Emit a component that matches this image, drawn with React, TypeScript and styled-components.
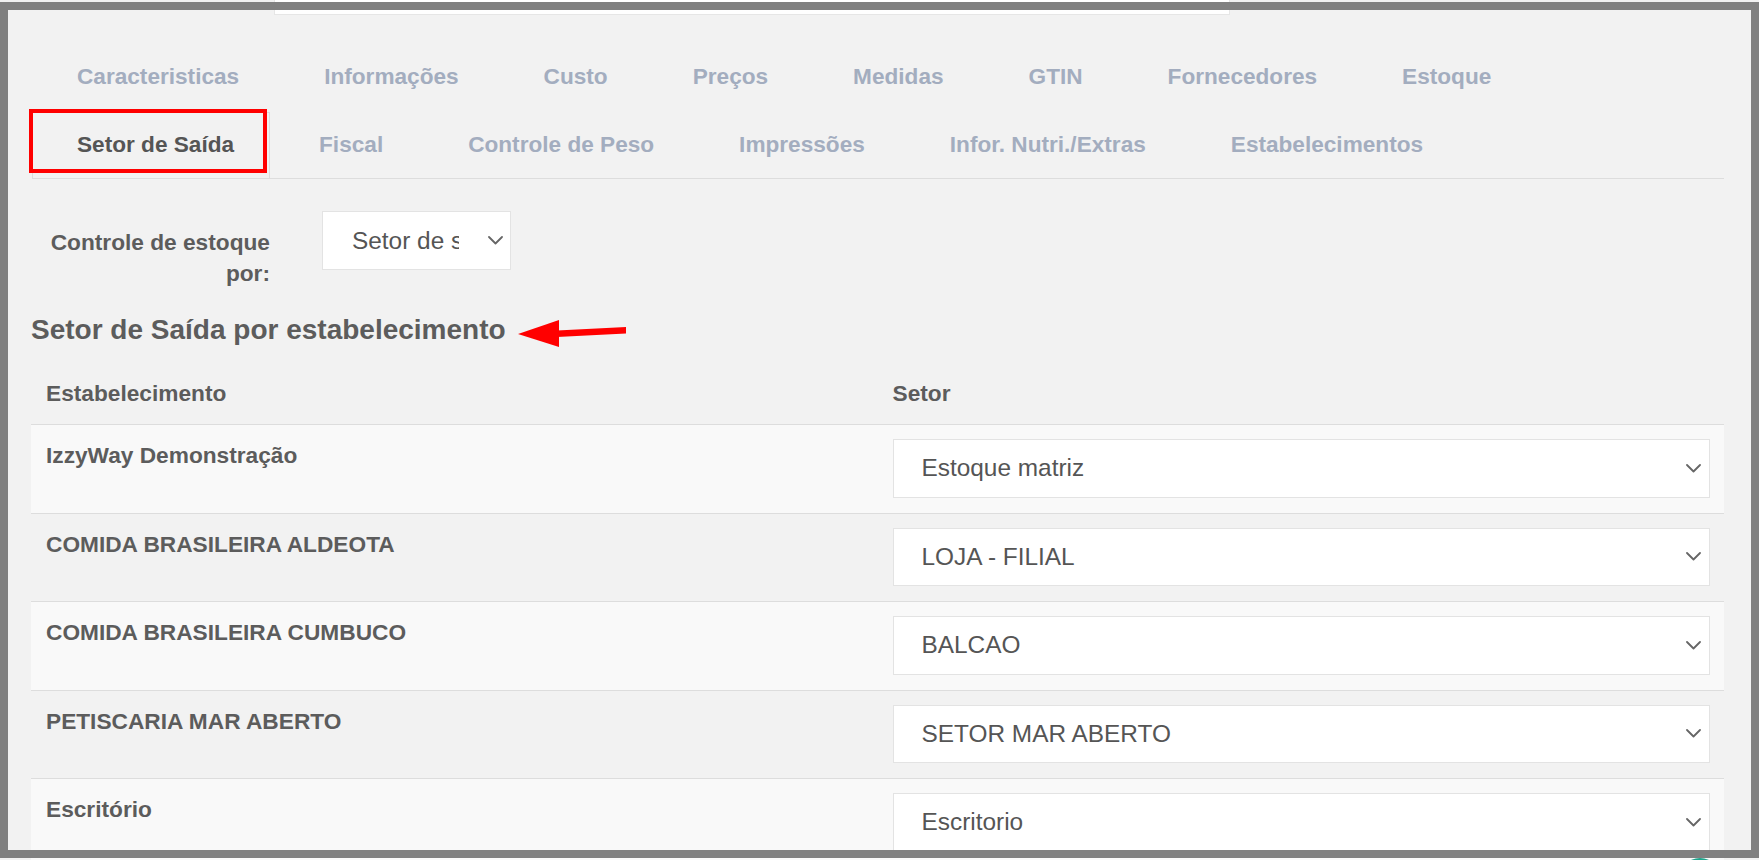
import React from "react";
import styled, { createGlobalStyle } from "styled-components";

const GlobalStyle = createGlobalStyle`
  html, body {
    margin: 0;
    padding: 0;
    background: #f2f2f2;
    overflow: hidden;
  }
  body {
    font-family: "Liberation Sans", Arial, Helvetica, sans-serif;
  }
  *, *::before, *::after {
    box-sizing: border-box;
  }
`;

const Page = styled.div`
  position: relative;
  width: 1759px;
  height: 860px;
  overflow: hidden;
  background: #f2f2f2;
`;

const Content = styled.div`
  display: flex;
  flex-direction: column;
  padding: 0 35px 0 31px;
`;

const TopCard = styled.div`
  margin-left: 243px;
  width: 956px;
  height: 15px;
  background: #ffffff;
  border: 1px solid #e6e6e6;
  border-top: none;
`;

const TabList = styled.ul`
  list-style: none;
  margin: 29px 0 0 1px;
  padding: 0;
  display: flex;
  flex-wrap: wrap;
  row-gap: 2px;
  border-bottom: 1px solid #dddddd;
`;

const TabItem = styled.li<{ $active?: boolean }>`
  position: relative;
  margin-right: 4px;
  padding: 14px 35px 16px 44px;
  border: 1px solid ${(p) => (p.$active ? "#dddddd" : "transparent")};
  border-bottom: none;
  font-size: 22.62px;
  font-weight: 700;
  line-height: 35px;
  white-space: nowrap;
  color: ${(p) => (p.$active ? "#555555" : "#a3adbf")};
  cursor: pointer;
`;

const Highlight = styled.span`
  position: absolute;
  left: -4px;
  top: -4px;
  width: 238px;
  height: 64px;
  border: 4px solid #ff0000;
  pointer-events: none;
`;

const FormRow = styled.div`
  display: grid;
  grid-template-columns: 239px 189px;
  column-gap: 52px;
  align-items: start;
  margin-top: 32px;
`;

const FieldLabel = styled.label`
  padding-top: 15.5px;
  text-align: right;
  font-size: 22.7px;
  font-weight: 700;
  line-height: 31px;
  color: #5c5c5c;
`;

const SelectBox = styled.div<{ $compact?: boolean }>`
  display: flex;
  align-items: center;
  height: ${(p) => (p.$compact ? "59px" : "58.5px")};
  padding: ${(p) => (p.$compact ? "0 7px 0 29px" : "0 8px 0 28px")};
  background: #ffffff;
  border: 1px solid #e3e3e3;
  font-size: 24.4px;
  line-height: 30px;
  color: #555555;
`;

const SelectValue = styled.span<{ $compact?: boolean }>`
  flex: 1;
  min-width: 0;
  overflow: hidden;
  white-space: nowrap;
  margin-right: ${(p) => (p.$compact ? "29px" : "12px")};
`;

const Chevron = styled.svg`
  flex: none;
  display: block;
`;

const SectionTitle = styled.div`
  display: flex;
  height: 36px;
  margin-top: 23.5px;
`;

const TitleText = styled.h3`
  margin: 0;
  font-size: 28px;
  font-weight: 700;
  line-height: 36px;
  color: #5c5c5c;
  white-space: nowrap;
`;

const Arrow = styled.svg`
  flex: none;
  display: block;
  margin-left: 11px;
  margin-top: 7px;
`;

const Table = styled.div`
  display: flex;
  flex-direction: column;
  margin-top: 14px;
`;

const HeaderRow = styled.div`
  display: grid;
  grid-template-columns: 1fr 1fr;
`;

const HeaderCell = styled.div`
  padding: 15px;
  font-size: 22.7px;
  font-weight: 700;
  line-height: 32px;
  color: #5c5c5c;
`;

const BodyRow = styled.div<{ $striped: boolean }>`
  display: grid;
  grid-template-columns: 1fr 1fr;
  border-top: 1px solid #dddddd;
  background: ${(p) => (p.$striped ? "#f9f9f9" : "#f2f2f2")};
`;

const NameCell = styled.div`
  padding: 14px 15px;
  font-size: 22.7px;
  font-weight: 700;
  line-height: 33px;
  color: #5c5c5c;
`;

const SectorCell = styled.div`
  padding: 14px 14px 15px 15px;
`;

const Frame = styled.div`
  position: absolute;
  left: 0;
  top: 2px;
  width: 1759px;
  height: 856px;
  border: 8px solid #808080;
  pointer-events: none;
  z-index: 10;
`;

const ChatBubble = styled.div`
  position: absolute;
  left: 1678px;
  top: 858px;
  width: 44px;
  height: 44px;
  border-radius: 50%;
  background: #1fa58c;
  z-index: 11;
`;

const tabRows = [
  "Caracteristicas",
  "Informações",
  "Custo",
  "Preços",
  "Medidas",
  "GTIN",
  "Fornecedores",
  "Estoque",
  "Setor de Saída",
  "Fiscal",
  "Controle de Peso",
  "Impressões",
  "Infor. Nutri./Extras",
  "Estabelecimentos",
];

const rows = [
  { name: "IzzyWay Demonstração", sector: "Estoque matriz" },
  { name: "COMIDA BRASILEIRA ALDEOTA", sector: "LOJA - FILIAL" },
  { name: "COMIDA BRASILEIRA CUMBUCO", sector: "BALCAO" },
  { name: "PETISCARIA MAR ABERTO", sector: "SETOR MAR ABERTO" },
  { name: "Escritório", sector: "Escritorio" },
];

const ChevronIcon = () => (
  <Chevron width="15" height="9" viewBox="0 0 15 9">
    <polyline
      points="1,1 7.5,7.5 14,1"
      fill="none"
      stroke="#666666"
      strokeWidth="1.8"
      strokeLinecap="round"
      strokeLinejoin="round"
    />
  </Chevron>
);

const Select = ({ value, compact }: { value: string; compact?: boolean }) => (
  <SelectBox $compact={compact}>
    <SelectValue $compact={compact}>{value}</SelectValue>
    <ChevronIcon />
  </SelectBox>
);

export default function App() {
  const active = "Setor de Saída";
  return (
    <>
      <GlobalStyle />
      <Page>
        <Content>
          <TopCard />
          <TabList>
            {tabRows.map((t) => (
              <TabItem key={t} $active={t === active}>
                {t}
                {t === active && <Highlight />}
              </TabItem>
            ))}
          </TabList>

          <FormRow>
            <FieldLabel>Controle de estoque por:</FieldLabel>
            <Select value="Setor de saída" compact />
          </FormRow>

          <SectionTitle>
            <TitleText>Setor de Saída por estabelecimento</TitleText>
            <Arrow width="110" height="30" viewBox="0 0 110 30">
              <polygon points="1,15 42,1 42,28" fill="#ff0000" />
              <polygon points="40,11.5 109,8 109,14.5 40,18" fill="#ff0000" />
            </Arrow>
          </SectionTitle>

          <Table>
            <HeaderRow>
              <HeaderCell>Estabelecimento</HeaderCell>
              <HeaderCell>Setor</HeaderCell>
            </HeaderRow>
            {rows.map((r, i) => (
              <BodyRow key={r.name} $striped={i % 2 === 0}>
                <NameCell>{r.name}</NameCell>
                <SectorCell>
                  <Select value={r.sector} />
                </SectorCell>
              </BodyRow>
            ))}
          </Table>
        </Content>
        <Frame />
        <ChatBubble />
      </Page>
    </>
  );
}
